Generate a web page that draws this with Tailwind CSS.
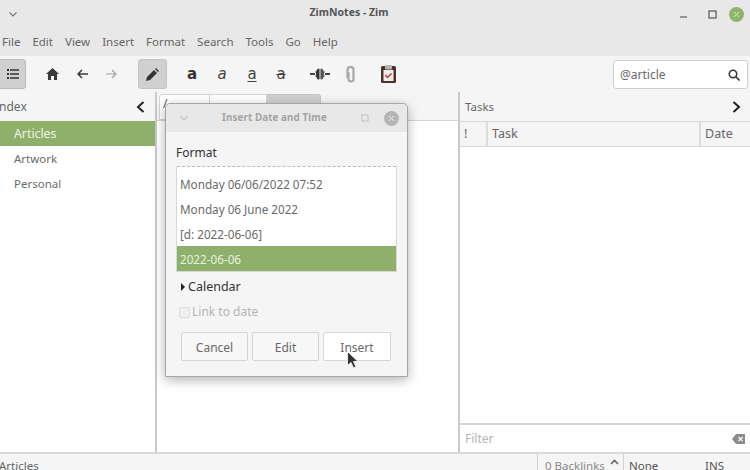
<!doctype html>
<html><head><meta charset="utf-8"><script src="https://cdn.jsdelivr.net/npm/@tailwindcss/browser@4"></script></head>
<body class="m-0">
<div class="relative w-[750px] h-[470px] overflow-hidden flex flex-col bg-[#f5f5f5] text-[#5a5a5a] font-['Noto_Sans',sans-serif] text-[13px]">
  <!-- title -->
  <div class="h-[28px] shrink-0 bg-[#e8e8e8] flex items-center relative">
    <svg class="ml-[8px]" width="10" height="7" viewBox="0 0 10 7"><path d="M1.500 1.500 5 5l3.500-3.500" fill="none" stroke="#777" stroke-width="1.200"/></svg>
    <div class="absolute left-0 right-[52px] top-[4px] text-center text-[10.500px] font-bold text-[#555] leading-[17px]">ZimNotes - Zim</div>
    <div class="ml-auto flex items-center">
      <svg width="10" height="10" viewBox="0 0 10 10" class="mr-[19px]"><path d="M1 8h7" stroke="#777" stroke-width="1.500"/></svg>
      <svg width="9" height="9" viewBox="0 0 9 9" class="mr-[12px]"><rect x="1" y="1" width="7" height="7" fill="none" stroke="#555" stroke-width="1.200"/></svg>
      <div class="w-[15px] h-[15px] mr-[6px] rounded-full bg-[#8fb46c] flex items-center justify-center"><svg width="7" height="7" viewBox="0 0 7 7"><path d="M1 1l5 5M6 1 1 6" stroke="#d9e6c9" stroke-width="1"/></svg></div>
    </div>
  </div>
  <!-- menu -->
  <div class="h-[28px] shrink-0 bg-[#e8e8e8] flex items-center text-[11.500px] pl-[2px] gap-[12px] text-[#666]">
    <span>File</span><span>Edit</span><span>View</span><span>Insert</span><span>Format</span><span>Search</span><span>Tools</span><span>Go</span><span>Help</span>
  </div>
  <!-- toolbar -->
  <div class="h-[36px] shrink-0 flex items-center relative">
    <div class="w-[27px] h-[30px] ml-[-1px] rounded-r-[3px] bg-[#d0d0d0] border border-[#bdbdbd] flex items-center justify-center">
      <svg width="12" height="10" viewBox="0 0 12 10" fill="#333"><path d="M0 0h2v2H0zM3 .3h9v1.400H3zM0 4h2v2H0zM3 4.300h9v1.400H3zM0 8h2v2H0zM3 8.300h9v1.400H3z"/></svg>
    </div>
    <svg class="ml-[20px]" width="13" height="12" viewBox="0 0 13 12" fill="#3a3a3a"><path d="M6.500 0 13 6h-2v6H8V8H5v4H2V6H0z"/></svg>
    <svg class="ml-[18px]" width="11" height="10" viewBox="0 0 11 10" fill="none" stroke="#3a3a3a" stroke-width="1.500"><path d="M11 5H1.500M5 1 1 5l4 4"/></svg>
    <svg class="ml-[18px]" width="11" height="10" viewBox="0 0 11 10" fill="none" stroke="#a3a3a3" stroke-width="1.200"><path d="M0 5h9.500M6 1l4 4-4 4"/></svg>
    <div class="ml-[21px] w-[29px] h-[30px] rounded-[3px] bg-[#d0d0d0] border border-[#c4c4c4] flex items-center justify-center">
      <svg width="13" height="13" viewBox="0 0 13 13" fill="#333"><path d="M0 13l1-4 7-7 3 3-7 7zM9 1l1-1 3 3-1 1z"/></svg>
    </div>
    <span class="ml-[19px] w-[12px] text-center text-[15px] leading-none font-bold text-[#333] font-['DejaVu_Sans',sans-serif]">a</span>
    <span class="ml-[18px] w-[12px] text-center text-[15px] leading-none italic text-[#444] font-['DejaVu_Sans',sans-serif]">a</span>
    <span class="ml-[18px] w-[12px] text-center text-[15px] leading-none underline underline-offset-2 text-[#444] font-['DejaVu_Sans',sans-serif]">a</span>
    <span class="ml-[17px] w-[12px] text-center text-[15px] leading-none line-through text-[#444] font-['DejaVu_Sans',sans-serif]">a</span>
    <svg class="ml-[23px]" width="20" height="12" viewBox="0 0 20 12"><path d="M0 6h5M15 6h5" stroke="#444" stroke-width="2"/><path d="M5 4h2M13 4h2M5 8h2M13 8h2" stroke="#666" stroke-width="1"/><ellipse cx="8.500" cy="6" rx="2.500" ry="5.500" fill="#333"/><ellipse cx="11.500" cy="6" rx="2.500" ry="5.500" fill="#555"/><path d="M10 0v12" stroke="#ddd" stroke-width="1"/></svg>
    <svg class="ml-[15px]" width="11" height="17" viewBox="0 0 11 17"><path d="M2.500 12V4a3 3 0 0 1 6 0v9a2.500 2.500 0 0 1-5 0V6" fill="none" stroke="#a8a8a8" stroke-width="2.200"/></svg>
    <svg class="ml-[25px]" width="15" height="18" viewBox="0 0 15 18"><rect x="0" y="1" width="15" height="17" rx="1.500" fill="#4a3428"/><rect x="2.500" y="5" width="10" height="11" fill="#eee"/><rect x="4" y="0" width="7" height="4.500" rx="1" fill="#b5b5b5"/><path d="M4.500 10l2 2.500 4-4" fill="none" stroke="#c33" stroke-width="1.500"/></svg>
    <div class="absolute right-[2px] top-[4px] w-[135px] h-[29px] bg-white border border-[#cfcfcf] rounded-[3px] flex items-center px-[6px] text-[#6a6a6a] text-[12px]">
      <span>@article</span>
      <svg class="ml-auto mr-[1px]" width="12" height="12" viewBox="0 0 12 12" fill="none" stroke="#333" stroke-width="1.600"><circle cx="5" cy="5" r="3.700"/><path d="M7.800 7.800 11.500 11.500"/></svg>
    </div>
  </div>
  <!-- panes -->
  <div class="flex-1 flex min-h-0">
    <div class="w-[155px] shrink-0 flex flex-col">
      <div class="h-[29px] shrink-0 flex items-center justify-between pr-[10px] text-[12px] text-[#666] overflow-hidden"><span class="ml-[-5px]">Index</span>
        <svg width="9" height="12" viewBox="0 0 9 12" fill="none" stroke="#222" stroke-width="2"><path d="M7.500 1 2 6l5.500 5"/></svg></div>
      <div class="flex-1 bg-white">
        <div class="h-[25px] bg-[#8fb06b] text-[#f0f5e6] pl-[14px] leading-[25px] text-[12.300px]">Articles</div>
        <div class="h-[25px] pl-[14px] leading-[25px] text-[11.500px] text-[#6b6b6b]">Artwork</div>
        <div class="h-[25px] pl-[14px] leading-[25px] text-[11.500px] text-[#6b6b6b]">Personal</div>
      </div>
    </div>
    <div class="w-[2px] shrink-0 bg-[#c9c9c9]"></div>
    <div class="w-[301px] shrink-0 flex flex-col bg-white">
      <div class="h-[29px] shrink-0 bg-[#f5f5f5] flex items-end pl-[2px] border-b border-[#d5d5d5]">
        <div class="w-[51px] h-[26px] bg-white border border-[#d5d5d5] rounded-tl-[3px] text-[12px] pl-[3px]">/</div>
        <div class="w-[57px] h-[26px] bg-white border-y border-r border-[#d5d5d5]"></div>
        <div class="w-[54px] h-[26px] bg-[#d0d0d0] border-y border-r border-[#c4c4c4] rounded-tr-[3px]"></div>
      </div>
      <div class="flex-1"></div>
    </div>
    <div class="w-[2px] shrink-0 bg-[#c9c9c9]"></div>
    <div class="flex-1 flex flex-col bg-white">
      <div class="h-[29px] shrink-0 bg-[#f5f5f5] flex items-center justify-between pl-[5px] pr-[9px] text-[11.500px] text-[#666]"><span>Tasks</span>
        <svg width="9" height="12" viewBox="0 0 9 12" fill="none" stroke="#222" stroke-width="2"><path d="M1.500 1 7 6l-5.500 5"/></svg></div>
      <div class="h-[26px] shrink-0 bg-[#f5f5f5] border-y border-[#d9d9d9] flex text-[12.500px] text-[#666] leading-[24px]">
        <div class="w-[28px] pl-[4px] border-r-2 border-[#dcdcdc]">!</div>
        <div class="w-[213px] pl-[4px] border-r-2 border-[#dcdcdc]">Task</div>
        <div class="pl-[4px]">Date</div>
      </div>
      <div class="flex-1"></div>
      <div class="h-[29px] shrink-0 border-t-2 border-[#d5d5d5] flex items-center pl-[5px] pr-[5px] text-[12px] text-[#b4b4b4]">
        <span>Filter</span>
        <svg class="ml-auto" width="13" height="10" viewBox="0 0 13 10"><path d="M4 0h9v10H4L0 5z" fill="#8c8c8c"/><path d="M6.500 3l4 4M10.500 3l-4 4" stroke="#fff" stroke-width="1.200"/></svg>
      </div>
    </div>
  </div>
  <!-- status -->
  <div class="h-[18px] shrink-0 border-t-2 border-[#d9d9d9] flex text-[11.500px] leading-[24px] text-[#666] overflow-hidden">
    <span class="ml-[-1px] w-[538px]">Articles</span>
    <div class="w-[86px] border-l border-[#d0d0d0] pl-[7px] text-[#8a8a8a] flex gap-[5px]"><span>0 Backlinks</span><svg class="mt-[5px]" width="9" height="6" viewBox="0 0 9 6" fill="none" stroke="#666" stroke-width="1.600"><path d="M1 5l3.500-3.500L8 5"/></svg></div>
    <div class="w-[82px] border-l border-[#d0d0d0] pl-[5px] text-[#555]">None</div>
    <span class="text-[#555]">INS</span>
  </div>
  <!-- dialog -->
  <div class="absolute left-[165px] top-[103px] w-[243px] h-[274px] bg-[#f5f5f5] rounded-t-[5px] border border-[#a6a6a6] shadow-[0_3px_12px_rgba(0,0,0,0.3)] flex flex-col">
    <div class="h-[28px] shrink-0 bg-[#e8e8e8] rounded-t-[5px] flex items-center relative text-[#a4a4a4]">
      <svg class="ml-[13px]" width="10" height="7" viewBox="0 0 10 7"><path d="M1.500 1.500 5 5l3.500-3.500" fill="none" stroke="#c4c4c4" stroke-width="1.200"/></svg>
      <div class="absolute left-0 right-[24px] top-[6px] text-center text-[9.800px] font-bold leading-[16px] tracking-[0.1px]">Insert Date and Time</div>
      <div class="ml-auto flex items-center">
        <svg width="8" height="8" viewBox="0 0 8 8" class="mr-[15px]"><rect x="1" y="1" width="6" height="6" fill="none" stroke="#c0c0c0"/></svg>
        <div class="w-[15px] h-[15px] mr-[8px] rounded-full bg-[#b5b5b5] flex items-center justify-center"><svg width="7" height="7" viewBox="0 0 7 7"><path d="M1 1l5 5M6 1 1 6" stroke="#eee" stroke-width="1"/></svg></div>
      </div>
    </div>
    <div class="flex-1 flex flex-col px-[10px]">
      <div class="text-[12px] text-[#333] mt-[12px] leading-[18px]">Format</div>
      <div class="mt-[5px] h-[105px] bg-white border-x border-b border-[#d8d8d8] flex flex-col justify-end text-[11.700px] text-[#6a6a6a]">
        <div class="h-[5px] border-t border-dashed border-[#bdbdbd] shrink-0"></div>
        <div class="h-[25px] leading-[27px] pl-[3px]">Monday 06/06/2022 07:52</div>
        <div class="h-[25px] leading-[27px] pl-[3px]">Monday 06 June 2022</div>
        <div class="h-[25px] leading-[27px] pl-[3px]">[d: 2022-06-06]</div>
        <div class="h-[25px] leading-[27px] pl-[3px] bg-[#8fb06b] text-[#e8f0da]">2022-06-06</div>
      </div>
      <div class="mt-[6px] flex items-center h-[18px] text-[12.500px] text-[#333] pl-[5px]">
        <svg class="mr-[3px]" width="4" height="8" viewBox="0 0 4 8"><path d="M0 0l4 4-4 4z" fill="#222"/></svg>Calendar
      </div>
      <div class="mt-[7px] flex items-center h-[18px] text-[12px] text-[#b4b4b4] pl-[3px]">
        <div class="w-[11px] h-[11px] border border-[#dcdcdc] rounded-[2px] bg-[#f0f0f0] mr-[2px]"></div>Link to date
      </div>
      <div class="mt-[11px] flex gap-[4px] pl-[5px] text-[12px] text-[#6a6a6a]">
        <div class="w-[67px] h-[29px] pt-[2px] bg-[#f7f7f7] border border-[#d5d5d5] rounded-[2px] flex items-center justify-center">Cancel</div>
        <div class="w-[67px] h-[29px] pt-[2px] bg-[#f7f7f7] border border-[#d5d5d5] rounded-[2px] flex items-center justify-center">Edit</div>
        <div class="w-[68px] h-[29px] pt-[2px] bg-white border border-[#d5d5d5] rounded-[2px] flex items-center justify-center">Insert</div>
      </div>
    </div>
  </div>
  <!-- cursor -->
  <svg class="absolute left-[347px] top-[351px]" width="11" height="18" viewBox="0 0 11 18"><path d="M.500.500v14l3.500-3 2.500 5.500 2.500-1-2.500-5.500h4.500z" fill="#333" stroke="#eee" stroke-width="1"/></svg>
</div>
</body></html>
